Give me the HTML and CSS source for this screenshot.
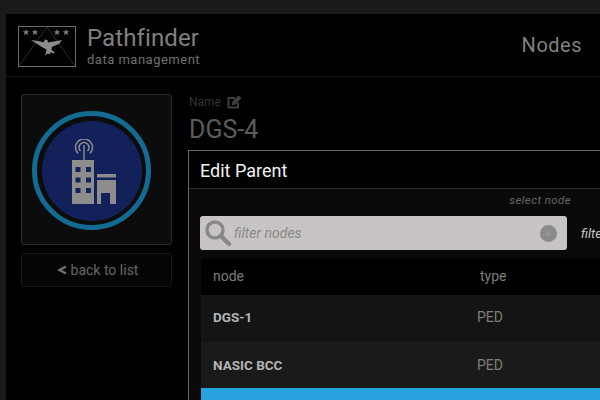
FILE: index.html
```html
<!DOCTYPE html>
<html lang="en">

<head>
 <meta charset="UTF-8">
 <meta name="viewport" content="width=device-width">
 <title>Pathfinder - Nodes</title>
 <link rel="stylesheet" href="styles.css">
</head>

<body>

 <div class="app">

  <header class="topbar">
   <svg class="logo" width="58" height="41" viewBox="0 0 58 41">
    <rect x="0.5" y="0.5" width="57" height="40" fill="#000" stroke="#6a6a6a"/>
    <path d="M1 40L29 1L57 40" fill="none" stroke="#2e2e2e"/>
    <path d="M8 3l.9 2.200h2.300l-1.800 1.500.7 2.300L8 7.700 5.900 9l.7-2.300-1.800-1.500h2.300zM17 3l.9 2.200h2.300l-1.800 1.500.7 2.300L17 7.700 14.900 9l.7-2.300-1.800-1.500h2.300zM39 3l.9 2.200h2.300l-1.800 1.500.7 2.300L39 7.700 36.900 9l.7-2.300-1.800-1.500h2.300zM48 3l.9 2.200h2.300l-1.800 1.500.7 2.300L48 7.700 45.900 9l.7-2.300-1.800-1.500h2.300z" fill="#7c7c7c"/>
    <path d="M13 14l10 1.500 2.500 1 1.500-3 2.500.5.500 2.500 14-2.500-3 4-4 1.500-3 1.500-.5 3 3.500 2.500-2 1-2.500-1.500-.5 2.500-2-1-3 2 1-3 .5-3-3-1.500-4-2.500z" fill="#8c8c8c"/>
   </svg>
   <div class="brand">
    <div class="brand-name">Pathfinder</div>
    <div class="brand-sub">data management</div>
   </div>
   <div class="page-title">Nodes</div>
  </header>

  <div class="content">

   <aside class="side">
    <div class="node-card">
     <div class="ring">
      <div class="disc">
       <svg class="node-icon" width="46" height="66" viewBox="0 0 46 66">
        <g fill="none" stroke="#8d8d8d" stroke-width="1.500">
         <path d="M7 14.500a8.500 8.500 0 1 1 12 0"/>
         <path d="M9.500 12a5 5 0 1 1 7 0"/>
        </g>
        <path d="M12.300 6h1.400v16h-1.400z" fill="#8d8d8d"/>
        <path fill-rule="evenodd" fill="#8d8d8d" d="M1 21h22v44H1zM4.500 28v5h5v-5zM15 28v5h5v-5zM4.500 38.500v5h5v-5zM15 38.500v5h5v-5zM4.500 49v5h5v-5zM15 49v5h5v-5z"/>
        <path d="M26 35h19v3.500H26z" fill="#8d8d8d"/>
        <path d="M26 41h19v24h-6V54h-9v11h-4z" fill="#8d8d8d"/>
       </svg>
      </div>
     </div>
    </div>
    <a class="back" href="#">
     <svg width="10" height="10" viewBox="0 0 10 10">
      <path d="M9 1.500L2.500 5L9 8.500" fill="none" stroke="#707070" stroke-width="2.400"/>
     </svg>
     back to list
    </a>
   </aside>

   <main class="main">
    <div class="field-label">
     Name
     <svg width="15" height="14" viewBox="0 0 15 14">
      <path d="M11 7.500V12.500H1.500V3H8" fill="none" stroke="#3f3f3f" stroke-width="2"/>
      <path d="M5 7l6.500-6.500 3 2.500L8 10H5z" fill="#3f3f3f"/>
     </svg>
    </div>
    <div class="field-value">DGS-4</div>

    <section class="modal">
     <h2 class="modal-title">Edit Parent</h2>
     <div class="modal-body">
      <div class="hint">select node</div>
      <div class="filters">
       <div class="search">
        <svg width="28" height="28" viewBox="0 0 28 28">
         <circle cx="11" cy="11" r="8" fill="none" stroke="#8a8886" stroke-width="3.500"/>
         <path d="M17 17l8 8" stroke="#8a8886" stroke-width="4.500" stroke-linecap="round"/>
        </svg>
        <span class="search-text">filter nodes</span>
        <svg class="clear" width="17" height="17" viewBox="0 0 17 17">
         <circle cx="8.500" cy="8.500" r="8.500" fill="#8a8a8c"/>
         <path d="M6 6l5 5M11 6l-5 5" stroke="#9a9a9a" stroke-width="1.200"/>
        </svg>
       </div>
       <span class="filter-other">filter</span>
      </div>
      <div class="row row-head">
       <span class="col-node">node</span>
       <span class="col-type">type</span>
      </div>
      <div class="row row-a">
       <span class="col-node">DGS-1</span>
       <span class="col-type">PED</span>
      </div>
      <div class="row row-b">
       <span class="col-node">NASIC BCC</span>
       <span class="col-type">PED</span>
      </div>
      <div class="row row-sel"></div>
     </div>
    </section>
   </main>

  </div>
 </div>

</body>
</html>
```

FILE: styles.css
```css
html, body {
  margin: 0;
  height: 100%;
  overflow: hidden;
}
body {
  background-color: #1a1a1a;
  font-family: Roboto, 'Liberation Sans', sans-serif;
  color: #808080;
}
.app {
  margin: 14px 0 0 6px;
  height: 386px;
  width: 594px;
  background-color: #000;
  overflow: hidden;
}
.topbar {
  display: flex;
  align-items: center;
  box-sizing: border-box;
  height: 63px;
  padding: 2px 18px 0 12px;
  border-bottom: 1px solid #161616;
}
.logo {
  flex: none;
}
.brand {
  margin-left: 11px;
}
.brand-name {
  font-size: 24px;
  line-height: 27px;
  letter-spacing: 0.1px;
  color: #808080;
}
.brand-sub {
  font-size: 13px;
  line-height: 16px;
  letter-spacing: 0.5px;
  color: #707070;
}
.page-title {
  margin-left: auto;
  font-size: 20px;
  letter-spacing: 0.5px;
  margin-top: -3px;
  color: #808080;
}
.content {
  display: flex;
  padding-top: 17px;
}
.side {
  flex: none;
  width: 151px;
  margin-left: 15px;
}
.node-card {
  display: flex;
  align-items: center;
  height: 151px;
  box-sizing: border-box;
  padding: 2px 0 0 10px;
  background-color: #0c0c0c;
  border: 1px solid #2c2c2c;
  border-radius: 3px;
}
.ring {
  display: flex;
  align-items: center;
  justify-content: center;
  width: 119px;
  height: 119px;
  box-sizing: border-box;
  border: 5px solid #136b91;
  border-radius: 50%;
}
.disc {
  display: flex;
  align-items: center;
  justify-content: center;
  width: 100px;
  height: 100px;
  border-radius: 50%;
  background-color: #13215a;
}
.node-icon {
  margin: 2px 0 0 5px;
}
.back {
  display: flex;
  align-items: center;
  justify-content: center;
  gap: 4px;
  margin-top: 8px;
  height: 34px;
  box-sizing: border-box;
  padding-left: 2px;
  border: 1px solid #1a1a1a;
  border-radius: 3px;
  background-color: #050505;
  color: #666;
  font-size: 14px;
  text-decoration: none;
}
.main {
  margin-left: 16px;
  flex: none;
  width: 620px;
}
.field-label {
  display: flex;
  align-items: center;
  gap: 6px;
  height: 16px;
  margin-left: 1px;
  font-size: 12px;
  color: #333;
}
.field-value {
  margin: 5px 0 0 1px;
  font-size: 25px;
  line-height: 30px;
  color: #5c5c5c;
}
.modal {
  margin-top: 5px;
  background-color: #0a0a0a;
  border: 1px solid #666;
  border-right: 0;
  border-bottom: 0;
  height: 260px;
}
.modal-title {
  margin: 0;
  height: 38px;
  box-sizing: border-box;
  padding-left: 11px;
  background-color: #000;
  border-bottom: 1px solid #2b2b2b;
  font-size: 18px;
  font-weight: 400;
  line-height: 39px;
  color: #f2f2f2;
}
.modal-body {
  padding-left: 11px;
}
.hint {
  width: 371px;
  height: 27px;
  padding-top: 5px;
  box-sizing: border-box;
  text-align: right;
  font-size: 11.500px;
  font-style: italic;
  line-height: 13px;
  letter-spacing: 0.4px;
  color: #666;
}
.filters {
  display: flex;
  align-items: center;
  gap: 14px;
  height: 34px;
}
.search {
  display: flex;
  align-items: center;
  flex: none;
  width: 367px;
  height: 34px;
  box-sizing: border-box;
  padding: 0 10px 0 4px;
  background-color: #c7c4c3;
  border-radius: 3px;
}
.search-text {
  margin-left: 2px;
  font-size: 14px;
  font-style: italic;
  color: #8a8886;
}
.clear {
  margin-left: auto;
}
.filter-other {
  font-size: 13px;
  font-style: italic;
  color: #c8c8c8;
}
.row {
  display: flex;
  align-items: center;
  box-sizing: border-box;
  margin-left: 1px;
  padding-left: 12px;
  font-size: 14px;
}
.row-head {
  margin-top: 8px;
  height: 37px;
  padding-bottom: 2px;
  background-color: #000;
  color: #7c7c7c;
}
.row-head .col-type {
  margin-left: 3px;
}
.row-a {
  height: 46px;
  padding-bottom: 2px;
  background-color: #141414;
}
.row-b {
  height: 47px;
  background-color: #1a1a1a;
}
.row-sel {
  height: 40px;
  background-color: #29a3df;
}
.col-node {
  width: 264px;
}
.row-a .col-node,
.row-b .col-node {
  font-size: 13.500px;
  font-weight: 700;
  color: #b4b4b4;
}
.col-type {
  color: #7e7e7e;
}
```
